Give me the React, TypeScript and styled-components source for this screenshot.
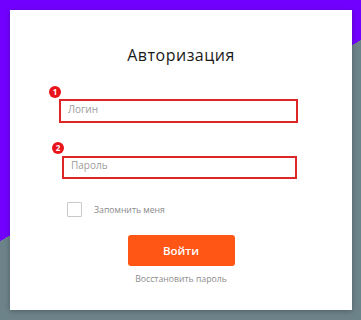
import React from "react";
import styled, { createGlobalStyle } from "styled-components";

const Global = createGlobalStyle`
  html, body { margin: 0; padding: 0; }
  body { font-family: "Open Sans", "Liberation Sans", sans-serif; }
  * { box-sizing: border-box; }
`;

const Page = styled.div`
  width: 361px;
  height: 320px;
  padding: 10px 9px 10px 10px;
  background: linear-gradient(150.9deg, #7200ff 210.6px, #6c8389 210.6px);
  overflow: hidden;
`;

const Card = styled.div`
  height: 300px;
  background: #ffffff;
  box-shadow: 0 1px 5px rgba(0, 0, 0, 0.28);
  padding-top: 34px;
  display: flex;
  flex-direction: column;
`;

const Title = styled.h1`
  margin: 0;
  font-weight: 400;
  font-size: 16px;
  line-height: 22px;
  letter-spacing: 0.5px;
  color: #1a1a1a;
  text-align: center;
`;

const Field = styled.div<{ $top: number; $left: number; $width: number; $height: number }>`
  position: relative;
  margin-top: ${(p) => p.$top}px;
  margin-left: ${(p) => p.$left}px;
  width: ${(p) => p.$width}px;
  height: ${(p) => p.$height}px;
`;

const Input = styled.input`
  width: 100%;
  height: 100%;
  border: 2px solid #dd2626;
  outline: none;
  padding: 0 0 4px 7px;
  font-family: inherit;
  font-size: 10px;
  color: #333;
  background: #fff;
  &::placeholder { color: #9c9c9c; }
`;

const Badge = styled.span`
  position: absolute;
  left: -10px;
  top: -10px;
  width: 12px;
  height: 12px;
  border-radius: 50%;
  background: #e8131b;
  color: #fff;
  font-size: 8px;
  font-weight: 700;
  line-height: 12px;
  text-align: center;
`;

const CheckRow = styled.label`
  display: flex;
  align-items: center;
  margin-top: 27px;
  margin-left: 57px;
  height: 15px;
  gap: 12px;
  font-size: 8.7px;
  color: #8a8a8a;
`;

const Box = styled.span`
  width: 15px;
  height: 15px;
  border: 1px solid #c9c9c9;
  border-radius: 1px;
  background: #fff;
`;

const Button = styled.button`
  align-self: center;
  margin-top: 18px;
  width: 107px;
  height: 31px;
  border: none;
  border-radius: 3px;
  background: #ff5515;
  color: #fff;
  font-family: inherit;
  font-size: 11.5px;
  font-weight: 600;
`;

const Restore = styled.a`
  align-self: center;
  margin-top: 6px;
  font-size: 8.7px;
  line-height: 14px;
  color: #8c8c8c;
  text-decoration: none;
`;

export default function App() {
  return (
    <>
      <Global />
      <Page>
        <Card>
          <Title>Авторизация</Title>
          <Field $top={30} $left={49} $width={239} $height={24}>
            <Input placeholder="Логин" />
            <Badge>1</Badge>
          </Field>
          <Field $top={32} $left={52} $width={235} $height={23}>
            <Input placeholder="Пароль" type="text" />
            <Badge>2</Badge>
          </Field>
          <CheckRow>
            <Box />
            Запомнить меня
          </CheckRow>
          <Button>Войти</Button>
          <Restore href="#">Восстановить пароль</Restore>
        </Card>
      </Page>
    </>
  );
}
